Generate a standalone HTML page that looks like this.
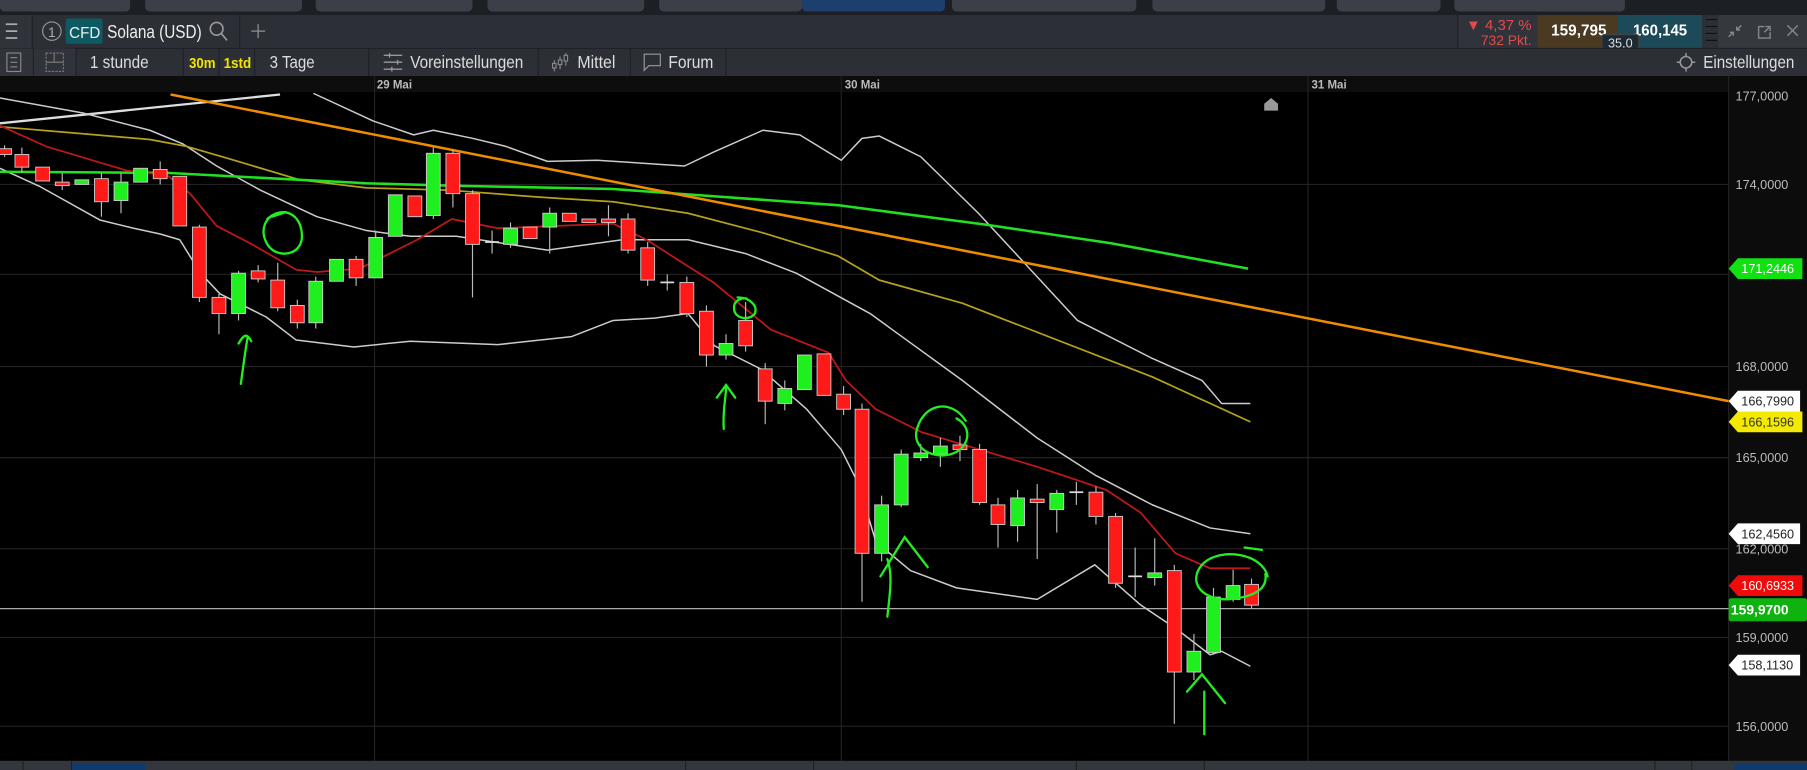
<!DOCTYPE html>
<html><head><meta charset="utf-8"><style>
html,body{margin:0;padding:0;background:#000;overflow:hidden}
svg{display:block}
text{font-family:"Liberation Sans",sans-serif}
</style></head><body>
<svg width="1807" height="770" viewBox="0 0 1568 668" preserveAspectRatio="none" xmlns="http://www.w3.org/2000/svg">
<rect x="0" y="0" width="1568" height="13" fill="#1c1f24"/>
<g fill="#3b4048">
<rect x="0" y="-6" width="113" height="16" rx="4"/><rect x="126" y="-6" width="136" height="16" rx="4"/><rect x="274" y="-6" width="136" height="16" rx="4"/><rect x="423" y="-6" width="136" height="16" rx="4"/><rect x="572" y="-6" width="124" height="16" rx="4"/>
<rect x="696" y="-6" width="124" height="16" rx="4" fill="#1d3f6e"/><rect x="826" y="-6" width="160" height="16" rx="4"/><rect x="1000" y="-6" width="150" height="16" rx="4"/><rect x="1160" y="-6" width="90" height="16" rx="4"/><rect x="1262" y="-6" width="148" height="16" rx="4"/>
</g>
<rect x="0" y="13" width="1568" height="29" fill="#2c3036"/>
<rect x="0" y="13" width="28" height="29" fill="#30343a"/>
<line x1="28" y1="13" x2="28" y2="42" stroke="#1e2126"/>
<g stroke="#aaa" stroke-width="1.5"><line x1="5" y1="21" x2="15" y2="21"/><line x1="5" y1="27" x2="15" y2="27"/><line x1="5" y1="33" x2="15" y2="33"/></g>
<circle cx="45" cy="27" r="8" fill="none" stroke="#999"/><text x="45" y="32" font-size="12" fill="#aaa" text-anchor="middle">1</text>
<rect x="57" y="16" width="32" height="22" rx="2" fill="#0e5a63"/>
<text x="60" y="33" font-size="14" fill="#eee" textLength="27" lengthAdjust="spacingAndGlyphs">CFD</text>
<text x="93" y="33" font-size="16" fill="#eee" textLength="82" lengthAdjust="spacingAndGlyphs">Solana (USD)</text>
<circle cx="188" cy="25" r="5.5" fill="none" stroke="#999" stroke-width="1.4"/><line x1="192" y1="29" x2="197" y2="35" stroke="#999" stroke-width="1.4"/>
<line x1="208" y1="13" x2="208" y2="42" stroke="#1e2126"/>
<g stroke="#888" stroke-width="1.2"><line x1="218" y1="27" x2="230" y2="27"/><line x1="224" y1="21" x2="224" y2="33"/></g>
<rect x="1265" y="13" width="69" height="29" fill="#30343a"/>
<line x1="1265" y1="13" x2="1265" y2="42" stroke="#1e2126"/>
<text x="1329" y="26" font-size="13" fill="#e24a4a" text-anchor="end">▼ 4,37 %</text>
<text x="1329" y="39" font-size="12" fill="#e24a4a" text-anchor="end">732 Pkt.</text>
<rect x="1334" y="13" width="70" height="29" fill="#4a3a22"/>
<text x="1346" y="31" font-size="14" font-weight="bold" fill="#fff" textLength="48" lengthAdjust="spacingAndGlyphs">159,795</text>
<rect x="1404" y="13" width="73" height="29" fill="#1d4a58"/>
<text x="1417" y="31" font-size="14" font-weight="bold" fill="#fff" textLength="47" lengthAdjust="spacingAndGlyphs">160,145</text>
<rect x="1390" y="30" width="32" height="12" rx="2" fill="#1d2a34" stroke="#444"/>
<text x="1406" y="41" font-size="11" fill="#ddd" text-anchor="middle">35,0</text>
<rect x="1477" y="13" width="91" height="29" fill="#2c3036"/>
<g stroke="#111" stroke-width="1"><line x1="1480" y1="17" x2="1490" y2="17"/><line x1="1480" y1="23" x2="1490" y2="23"/><line x1="1480" y1="29" x2="1490" y2="29"/><line x1="1480" y1="35" x2="1490" y2="35"/></g>
<rect x="1491" y="13" width="77" height="29" fill="#35393f"/>
<g stroke="#888" stroke-width="1.2" fill="none"><path d="M1500 32 L1504 28 M1501 28 h3 v3 M1511 22 L1507 26 M1507 23 v3 h3"/><path d="M1531 23 h-5 v10 h10 v-5 M1531 28 L1535 24 M1532 23 h4 v4"/><path d="M1551 22 l9 9 M1560 22 l-9 9"/></g>
<rect x="0" y="42" width="1568" height="24" fill="#2c3036"/>
<line x1="0" y1="42" x2="1568" y2="42" stroke="#1e2126"/>
<rect x="0" y="42" width="29" height="24" fill="#30343a"/>
<rect x="29" y="42" width="37" height="24" fill="#30343a"/>
<g stroke="#1e2126"><line x1="29" y1="42" x2="29" y2="66"/><line x1="66" y1="42" x2="66" y2="66"/><line x1="159" y1="42" x2="159" y2="66"/><line x1="190" y1="42" x2="190" y2="66"/><line x1="221" y1="42" x2="221" y2="66"/><line x1="320" y1="42" x2="320" y2="66"/><line x1="467" y1="42" x2="467" y2="66"/><line x1="547" y1="42" x2="547" y2="66"/><line x1="630" y1="42" x2="630" y2="66"/></g>
<rect x="6" y="46" width="12" height="16" fill="none" stroke="#888"/><g stroke="#888"><line x1="9" y1="50" x2="15" y2="50"/><line x1="9" y1="54" x2="15" y2="54"/><line x1="9" y1="58" x2="15" y2="58"/></g>
<rect x="40" y="46" width="15" height="16" fill="none" stroke="#777" stroke-dasharray="2 1"/><line x1="40" y1="54" x2="55" y2="54" stroke="#777"/><line x1="47" y1="46" x2="47" y2="54" stroke="#777"/>
<text x="78" y="59" font-size="15" fill="#ddd" textLength="51" lengthAdjust="spacingAndGlyphs">1 stunde</text>
<text x="164" y="59" font-size="13" font-weight="bold" fill="#f2e300" textLength="23" lengthAdjust="spacingAndGlyphs">30m</text>
<text x="194" y="59" font-size="13" font-weight="bold" fill="#f2e300" textLength="24" lengthAdjust="spacingAndGlyphs">1std</text>
<text x="234" y="59" font-size="15" fill="#ddd" textLength="39" lengthAdjust="spacingAndGlyphs">3 Tage</text>
<g stroke="#999" stroke-width="1.2"><line x1="333" y1="48" x2="349" y2="48"/><line x1="333" y1="54" x2="349" y2="54"/><line x1="333" y1="60" x2="349" y2="60"/><line x1="338" y1="46" x2="338" y2="50"/><line x1="345" y1="52" x2="345" y2="56"/><line x1="340" y1="58" x2="340" y2="62"/></g>
<text x="356" y="59" font-size="15" fill="#ddd" textLength="98" lengthAdjust="spacingAndGlyphs">Voreinstellungen</text>
<g stroke="#888"><line x1="481" y1="52" x2="481" y2="62"/><line x1="486" y1="49" x2="486" y2="60"/><line x1="491" y1="46" x2="491" y2="57"/><rect x="479.5" y="55" width="3" height="4" fill="#2c3036"/><rect x="484.5" y="52" width="3" height="4" fill="#2c3036"/><rect x="489.5" y="48" width="3" height="5" fill="#2c3036"/></g>
<text x="501" y="59" font-size="15" fill="#ddd" textLength="33" lengthAdjust="spacingAndGlyphs">Mittel</text>
<path d="M559 47 h14 v10 h-10 l-4 4 z" fill="none" stroke="#999"/>
<text x="580" y="59" font-size="15" fill="#ddd" textLength="39" lengthAdjust="spacingAndGlyphs">Forum</text>
<circle cx="1463" cy="54" r="5" fill="none" stroke="#999" stroke-width="1.3"/>
<g stroke="#999" stroke-width="1.3"><line x1="1463" y1="46" x2="1463" y2="49"/><line x1="1463" y1="59" x2="1463" y2="62"/><line x1="1455" y1="54" x2="1458" y2="54"/><line x1="1468" y1="54" x2="1471" y2="54"/></g>
<text x="1478" y="59" font-size="15" fill="#ddd" textLength="79" lengthAdjust="spacingAndGlyphs">Einstellungen</text>
<rect x="0" y="66" width="1568" height="594" fill="#000"/>
<rect x="0" y="66" width="1500" height="14" fill="#0d0d0d"/>
<rect x="1500" y="66" width="68" height="594" fill="#0c0c0c"/>
<line x1="1500" y1="66" x2="1500" y2="660" stroke="#222"/>
<g stroke="#222" stroke-width="1">
<line x1="325" y1="66" x2="325" y2="660"/><line x1="730" y1="66" x2="730" y2="660"/><line x1="1135" y1="66" x2="1135" y2="660"/>
<line x1="0" y1="160" x2="1500" y2="160"/><line x1="0" y1="238" x2="1500" y2="238"/><line x1="0" y1="318" x2="1500" y2="318"/><line x1="0" y1="397" x2="1500" y2="397"/><line x1="0" y1="476" x2="1500" y2="476"/><line x1="0" y1="553" x2="1500" y2="553"/><line x1="0" y1="630" x2="1500" y2="630"/>
</g>
<g font-size="10" fill="#bbb" font-weight="bold"><text x="327" y="77">29 Mai</text><text x="733" y="77">30 Mai</text><text x="1138" y="77">31 Mai</text></g>
<g font-size="11" fill="#bbb"><text x="1506" y="87">177,0000</text><text x="1506" y="164">174,0000</text><text x="1506" y="322">168,0000</text><text x="1506" y="401">165,0000</text><text x="1506" y="480">162,0000</text><text x="1506" y="557">159,0000</text><text x="1506" y="634">156,0000</text></g>
<path d="M1097 96 v-6 l6 -5 l6 5 v6 z" fill="#999"/>
<line x1="0" y1="528" x2="1500" y2="528" stroke="#aaa" stroke-width="1"/>
<g fill="none" stroke-linejoin="round">
<polyline stroke="#ddd" stroke-width="2" points="0,107 243,82"/>
<polyline stroke="#ccc" stroke-width="1.3" points="272,81 324,105 359,117 376,113 410,120 439,127 475,140 518,139 594,144 619,132 662,113 694,117 730,139 748,120 763,118 799,136 849,185 935,278 1000,311 1043,330 1060,350 1085,350"/>
<polyline stroke="#ccc" stroke-width="1.3" points="0,85 72,98 130,113 159,125 188,144 226,165 275,188 318,200 356,205 396,205 475,217 540,208 597,208 647,220 691,237 755,272 835,330 900,380 950,412 1000,438 1050,458 1085,463"/>
<polyline stroke="#ccc" stroke-width="1.3" points="0,146 35,162 87,191 116,198 139,203 156,208 174,237 191,255 231,275 257,295 307,301 356,296 432,299 496,292 532,278 568,276 597,272 620,300 660,320 700,355 730,390 745,420 760,470 790,495 830,510 900,520 950,490 990,525 1020,545 1050,568 1060,565 1085,578"/>
<polyline stroke="#b5a21a" stroke-width="1.5" points="0,110 72,116 130,121 162,127 203,139 260,156 318,163 390,165 468,171 532,175 597,185 662,202 727,222 763,243 835,263 1000,327 1085,366"/>
<polyline stroke="#22e022" stroke-width="2.2" points="0,149 145,150 318,159 390,161 532,164 727,178 856,195 964,211 1083,233"/>
<polyline stroke="#f08c00" stroke-width="2.2" points="148,82 1500,348"/>
<polyline stroke="#c01818" stroke-width="1.5" points="0,109 40,127 110,148 145,152 165,168 188,196 217,211 257,234 275,236 312,233 362,208 392,190 432,198 532,194 561,208 619,245 669,286 719,306 734,330 760,355 800,375 850,390 900,405 960,425 990,445 1020,480 1050,493 1085,493"/>
</g>
<g stroke="#bbb" stroke-width="1">
<line x1="4" y1="126" x2="4" y2="136"/><line x1="19" y1="128" x2="19" y2="150"/><line x1="54" y1="150" x2="54" y2="165"/><line x1="88" y1="150" x2="88" y2="188"/><line x1="105" y1="150" x2="105" y2="185"/><line x1="139" y1="140" x2="139" y2="160"/><line x1="173" y1="195" x2="173" y2="262"/><line x1="190" y1="255" x2="190" y2="290"/><line x1="207" y1="235" x2="207" y2="278"/><line x1="224" y1="230" x2="224" y2="245"/><line x1="241" y1="228" x2="241" y2="270"/><line x1="258" y1="260" x2="258" y2="285"/><line x1="274" y1="240" x2="274" y2="285"/><line x1="309" y1="222" x2="309" y2="248"/><line x1="326" y1="200" x2="326" y2="240"/><line x1="376" y1="128" x2="376" y2="190"/><line x1="393" y1="130" x2="393" y2="180"/><line x1="410" y1="165" x2="410" y2="258"/><line x1="427" y1="200" x2="427" y2="220"/><line x1="443" y1="193" x2="443" y2="215"/><line x1="477" y1="180" x2="477" y2="220"/><line x1="528" y1="178" x2="528" y2="205"/><line x1="545" y1="185" x2="545" y2="220"/><line x1="562" y1="210" x2="562" y2="248"/><line x1="579" y1="238" x2="579" y2="252"/><line x1="596" y1="240" x2="596" y2="275"/><line x1="613" y1="265" x2="613" y2="318"/><line x1="630" y1="290" x2="630" y2="312"/><line x1="647" y1="262" x2="647" y2="305"/><line x1="664" y1="315" x2="664" y2="368"/><line x1="681" y1="330" x2="681" y2="356"/><line x1="732" y1="335" x2="732" y2="360"/><line x1="748" y1="350" x2="748" y2="522"/><line x1="765" y1="430" x2="765" y2="487"/><line x1="782" y1="390" x2="782" y2="440"/><line x1="799" y1="385" x2="799" y2="400"/><line x1="816" y1="380" x2="816" y2="405"/><line x1="833" y1="378" x2="833" y2="400"/><line x1="850" y1="385" x2="850" y2="438"/><line x1="866" y1="432" x2="866" y2="475"/><line x1="883" y1="425" x2="883" y2="470"/><line x1="900" y1="420" x2="900" y2="485"/><line x1="917" y1="425" x2="917" y2="462"/><line x1="934" y1="418" x2="934" y2="438"/><line x1="951" y1="422" x2="951" y2="455"/><line x1="968" y1="445" x2="968" y2="510"/><line x1="985" y1="475" x2="985" y2="518"/><line x1="1002" y1="467" x2="1002" y2="508"/><line x1="1019" y1="490" x2="1019" y2="628"/><line x1="1036" y1="550" x2="1036" y2="590"/><line x1="1053" y1="510" x2="1053" y2="568"/><line x1="1070" y1="494" x2="1070" y2="522"/><line x1="1086" y1="502" x2="1086" y2="528"/>
</g>
<g stroke="#ccc" stroke-width="0.8">
<g fill="#ff1a1a">
<rect x="-2" y="129" width="12" height="5"/><rect x="13" y="134" width="12" height="11"/><rect x="31" y="145" width="12" height="12"/><rect x="48" y="158" width="12" height="3"/><rect x="82" y="155" width="12" height="20"/><rect x="133" y="147" width="12" height="8"/><rect x="150" y="153" width="12" height="43"/><rect x="167" y="197" width="12" height="61"/><rect x="184" y="258" width="12" height="14"/><rect x="218" y="235" width="12" height="7"/><rect x="235" y="243" width="12" height="24"/><rect x="252" y="265" width="12" height="15"/><rect x="303" y="225" width="12" height="16"/><rect x="354" y="170" width="12" height="18"/><rect x="387" y="133" width="12" height="35"/><rect x="404" y="168" width="12" height="44"/><rect x="454" y="197" width="12" height="10"/><rect x="488" y="185" width="12" height="7"/><rect x="505" y="190" width="12" height="3"/><rect x="522" y="190" width="12" height="3"/><rect x="539" y="190" width="12" height="27"/><rect x="556" y="215" width="12" height="28"/><rect x="590" y="245" width="12" height="27"/><rect x="607" y="270" width="12" height="38"/><rect x="641" y="278" width="12" height="22"/><rect x="658" y="320" width="12" height="28"/><rect x="709" y="307" width="12" height="36"/><rect x="726" y="342" width="12" height="13"/><rect x="742" y="355" width="12" height="125"/><rect x="827" y="386" width="12" height="4"/><rect x="844" y="390" width="12" height="46"/><rect x="860" y="438" width="12" height="17"/><rect x="894" y="433" width="12" height="3"/><rect x="945" y="427" width="12" height="21"/><rect x="962" y="448" width="12" height="58"/><rect x="1013" y="495" width="12" height="88"/><rect x="1080" y="507" width="12" height="18"/>
</g>
<g fill="#1fef1f">
<rect x="65" y="156" width="12" height="4"/><rect x="99" y="158" width="12" height="16"/><rect x="116" y="146" width="12" height="12"/><rect x="201" y="237" width="12" height="35"/><rect x="268" y="244" width="12" height="36"/><rect x="286" y="225" width="12" height="19"/><rect x="320" y="206" width="12" height="35"/><rect x="337" y="169" width="12" height="36"/><rect x="370" y="133" width="12" height="54"/><rect x="437" y="198" width="12" height="14"/><rect x="471" y="185" width="12" height="12"/><rect x="624" y="298" width="12" height="10"/><rect x="675" y="337" width="12" height="13"/><rect x="692" y="308" width="12" height="30"/><rect x="759" y="438" width="12" height="42"/><rect x="776" y="394" width="12" height="44"/><rect x="793" y="393" width="12" height="4"/><rect x="810" y="387" width="12" height="7"/><rect x="877" y="432" width="12" height="24"/><rect x="911" y="428" width="12" height="14"/><rect x="996" y="497" width="12" height="4"/><rect x="1030" y="565" width="12" height="18"/><rect x="1047" y="518" width="12" height="48"/><rect x="1064" y="508" width="12" height="12"/>
</g>
</g>
<g stroke="#ddd" stroke-width="1.5"><line x1="421" y1="210" x2="433" y2="210"/><line x1="573" y1="245" x2="585" y2="245"/><line x1="928" y1="427" x2="940" y2="427"/><line x1="979" y1="500" x2="991" y2="500"/></g>
<g fill="none" stroke="#22ee22" stroke-width="2" stroke-linecap="round">
<path d="M232 190 C245 178 262 185 262 205 C262 222 240 225 232 212 C225 200 230 188 240 186 M236 188 L248 184"/>
<path d="M209 333 C211 318 213 303 215 292 M207 298 C211 291 214 288 218 296"/>
<path d="M640 258 C650 258 658 265 655 272 C650 279 637 276 637 268 C636 261 643 258 648 259"/>
<path d="M628 372 C627 355 630 345 630 336 M622 345 L630 334 L638 345"/>
<path d="M838 365 C825 345 800 350 795 375 C793 392 815 400 830 392 C842 385 843 370 830 363"/>
<path d="M770 535 C772 515 775 500 770 485 M764 500 L785 466 L805 492"/>
<path d="M1100 500 C1095 480 1060 475 1045 488 C1030 502 1040 520 1065 520 C1090 518 1100 510 1098 498 M1080 475 L1095 477"/>
<path d="M1045 637 C1045 620 1045 612 1045 600 M1030 600 L1043 585 L1063 610"/>
</g>
<g font-size="11">
<path d="M1500 348 l8 -9 h54 v18 h-54 z" fill="#fff"/><text x="1511" y="352" fill="#222">166,7990</text>
<path d="M1500 366 l8 -9 h56 v18 h-56 z" fill="#f4ea00"/><text x="1511" y="370" fill="#333">166,1596</text>
<path d="M1500 233 l8 -9 h56 v18 h-56 z" fill="#11e011"/><text x="1511" y="237" fill="#fff">171,2446</text>
<path d="M1500 463 l8 -9 h54 v18 h-54 z" fill="#fff"/><text x="1511" y="467" fill="#222">162,4560</text>
<path d="M1500 508 l8 -9 h56 v18 h-56 z" fill="#f00a0a"/><text x="1511" y="512" fill="#fff">160,6933</text>
<rect x="1500" y="519" width="68" height="20" rx="2" fill="#0fb30f"/><text x="1502" y="533" fill="#fff" font-size="12" font-weight="bold">159,9700</text>
<path d="M1500 577 l8 -9 h54 v18 h-54 z" fill="#fff"/><text x="1511" y="581" fill="#222">158,1130</text>
</g>
<rect x="0" y="660" width="1568" height="8" fill="#33373d"/>
<rect x="62" y="662" width="64" height="6" fill="#0e3a6e"/>
<rect x="1505" y="662" width="63" height="6" fill="#0e3a6e"/>
<g stroke="#1e2126"><line x1="20" y1="660" x2="20" y2="668"/><line x1="62" y1="660" x2="62" y2="668"/><line x1="595" y1="660" x2="595" y2="668"/><line x1="706" y1="660" x2="706" y2="668"/><line x1="934" y1="660" x2="934" y2="668"/><line x1="1045" y1="660" x2="1045" y2="668"/><line x1="1436" y1="660" x2="1436" y2="668"/><line x1="1468" y1="660" x2="1468" y2="668"/></g>
</svg>
</body></html>
